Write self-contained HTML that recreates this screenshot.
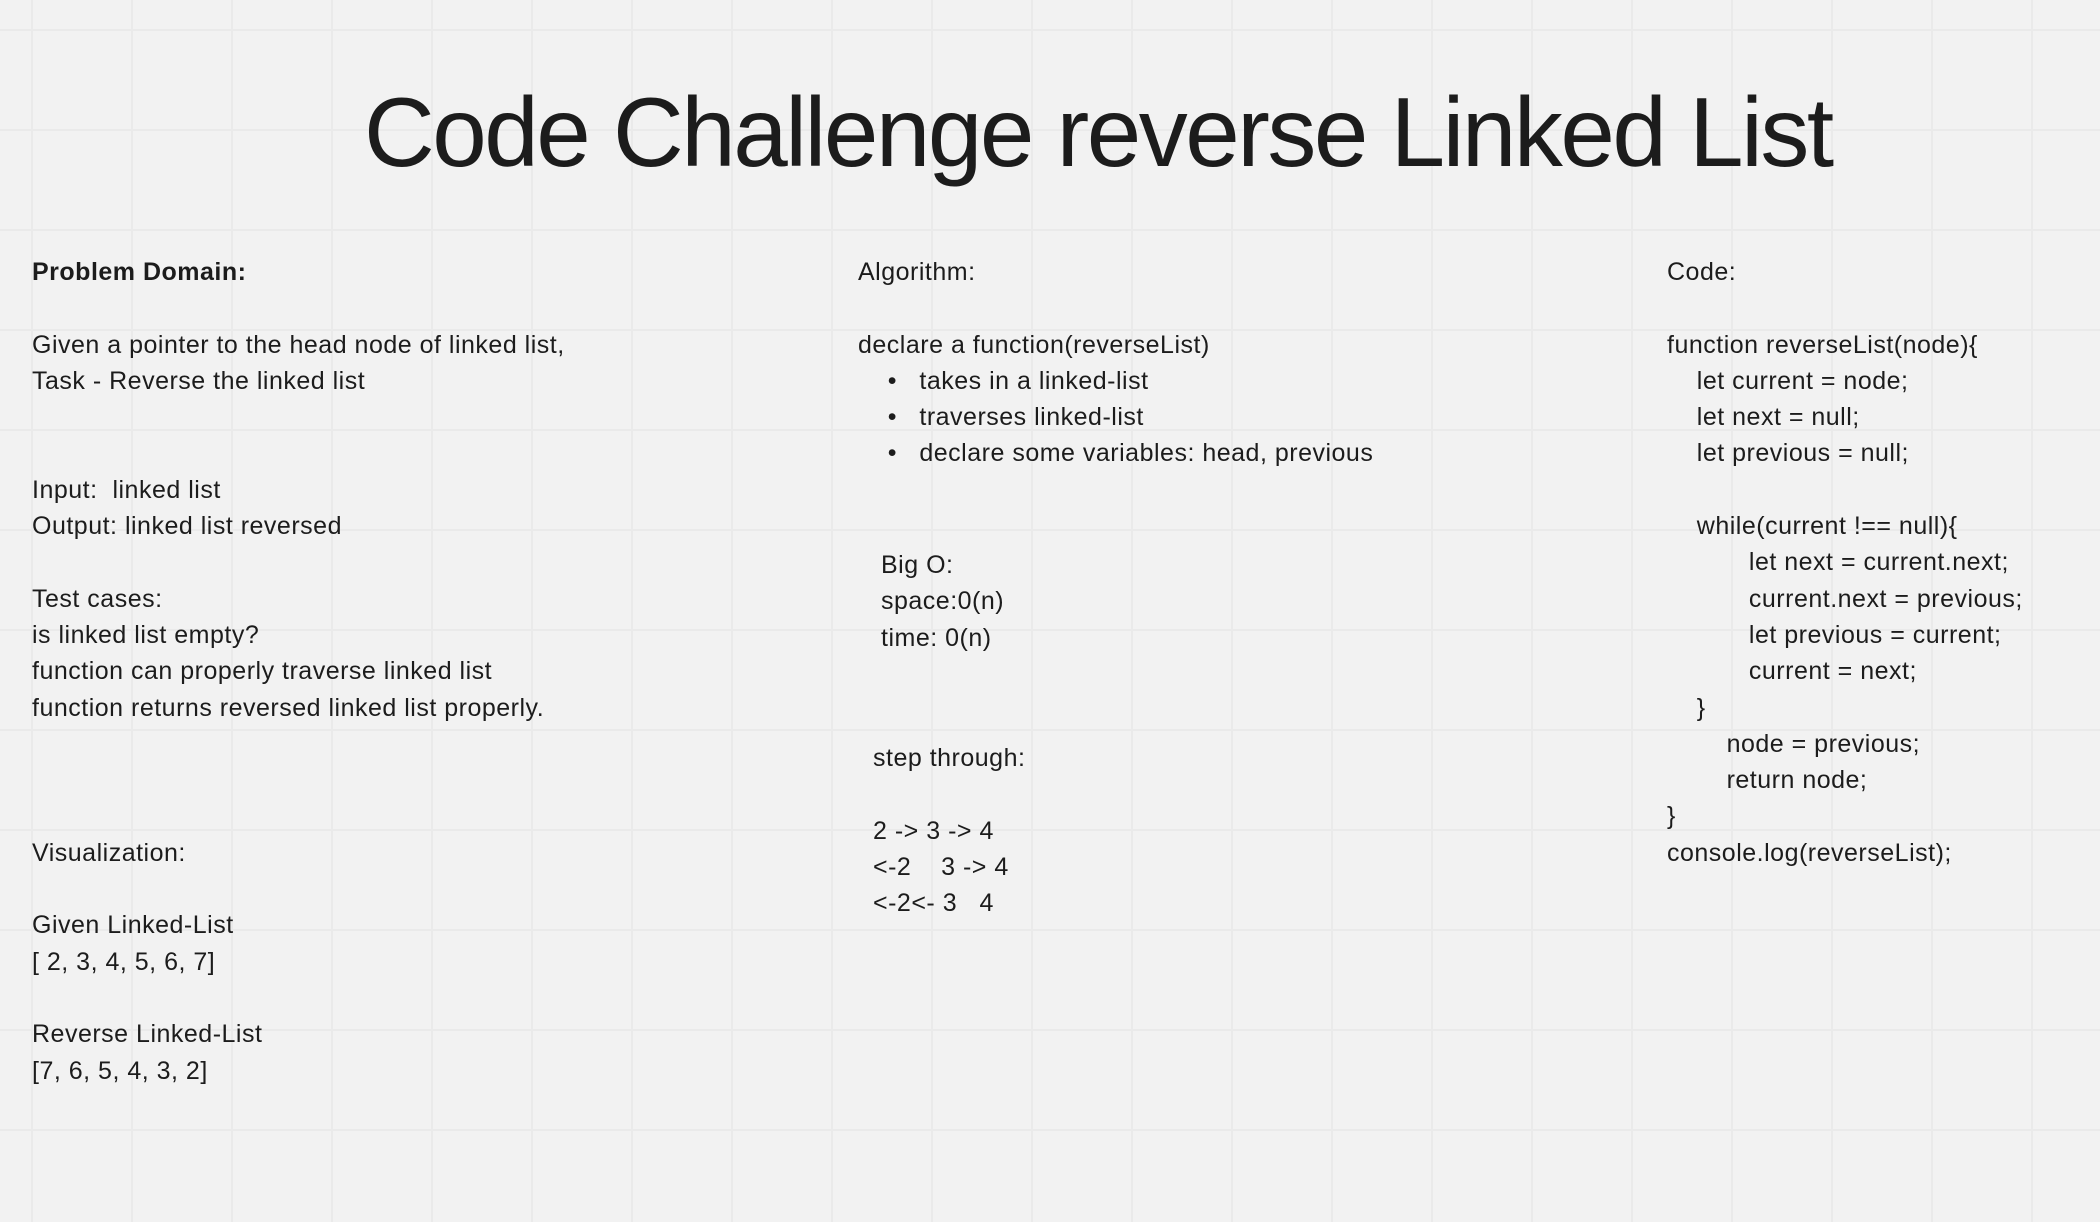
<!DOCTYPE html>
<html><head><meta charset="utf-8"><style>
html,body{margin:0;padding:0}
body{width:2100px;height:1222px;overflow:hidden;background-color:#f2f2f2;
background-image:linear-gradient(to right,#eaeaea 0,#eaeaea 2px,transparent 2px),linear-gradient(to bottom,#eaeaea 0,#eaeaea 2px,transparent 2px);
background-size:100px 100px;background-position:31px 29px;
font-family:"Liberation Sans",sans-serif;color:#1c1c1c;position:relative}
.t{position:absolute;left:364px;top:72px;font-size:98px;white-space:nowrap;letter-spacing:-2.5px;line-height:120px}
.b{position:absolute;font-size:25px;line-height:36.3px;white-space:pre;letter-spacing:0.5px}
</style></head><body>
<div class="t">Code Challenge reverse Linked List</div>
<div class="b" style="left:32px;top:254px"><b>Problem Domain:</b>

Given a pointer to the head node of linked list,
Task - Reverse the linked list


Input:  linked list
Output: linked list reversed

Test cases:
is linked list empty?
function can properly traverse linked list
function returns reversed linked list properly.



Visualization:

Given Linked-List
[ 2, 3, 4, 5, 6, 7]

Reverse Linked-List
[7, 6, 5, 4, 3, 2]</div>
<div class="b" style="left:858px;top:254px">Algorithm:

declare a function(reverseList)
    •   takes in a linked-list
    •   traverses linked-list
    •   declare some variables: head, previous</div>
<div class="b" style="left:881px;top:547px">Big O:
space:0(n)
time: 0(n)</div>
<div class="b" style="left:873px;top:740px">step through:

2 -&gt; 3 -&gt; 4
&lt;-2    3 -&gt; 4
&lt;-2&lt;- 3   4</div>
<div class="b" style="left:1667px;top:254px">Code:

function reverseList(node){
    let current = node;
    let next = null;
    let previous = null;

    while(current !== null){
           let next = current.next;
           current.next = previous;
           let previous = current;
           current = next;
    }
        node = previous;
        return node;
}
console.log(reverseList);</div>
</body></html>
